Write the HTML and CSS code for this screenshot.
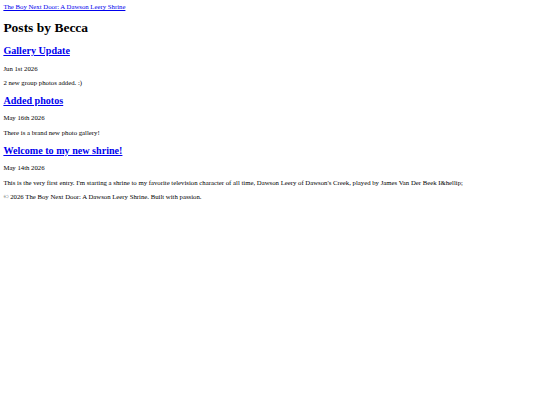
FILE: index.html
```html
<!DOCTYPE html>
<html>
<head>
<meta charset="utf-8">
<title>Posts by Becca</title>
<link rel="stylesheet" href="styles.css">
</head>
<body class="page">
<header class="site-header"><a href="#">The Boy Next Door: A Dawson Leery Shrine</a></header>
<main class="content">
<h1 class="title">Posts by Becca</h1>
<article class="post">
<h2 class="post-title"><a href="#">Gallery Update</a></h2>
<p class="post-date">Jun 1st 2026</p>
<p class="post-body">2 new group photos added. :)</p>
</article>
<article class="post">
<h2 class="post-title"><a href="#">Added photos</a></h2>
<p class="post-date">May 16th 2026</p>
<p class="post-body">There is a brand new photo gallery!</p>
</article>
<article class="post">
<h2 class="post-title"><a href="#">Welcome to my new shrine!</a></h2>
<p class="post-date">May 14th 2026</p>
<p class="post-body">This is the very first entry. I'm starting a shrine to my favorite television character of all time, Dawson Leery of Dawson's Creek, played by James Van Der Beek I&amp;hellip;</p>
</article>
</main>
<footer class="site-footer"><p>© 2026 The Boy Next Door: A Dawson Leery Shrine. Built with passion.</p></footer>
</body>
</html>
```
FILE: styles.css
```css
.page {
  margin: 3.375px;
  font-family: "Liberation Serif", "Times New Roman", serif;
  font-size: 6.75px;
  line-height: 1.12;
  color: #000;
  background: #fff;
}
a { color: #0000ee; }
.title { font-size: 2em; margin: 0.67em 0 0.72em; }
.post-title { font-size: 1.5em; margin: 0.83em 0; }
.post-date, .post-body, .site-footer p { margin: 1em 0; }
```
